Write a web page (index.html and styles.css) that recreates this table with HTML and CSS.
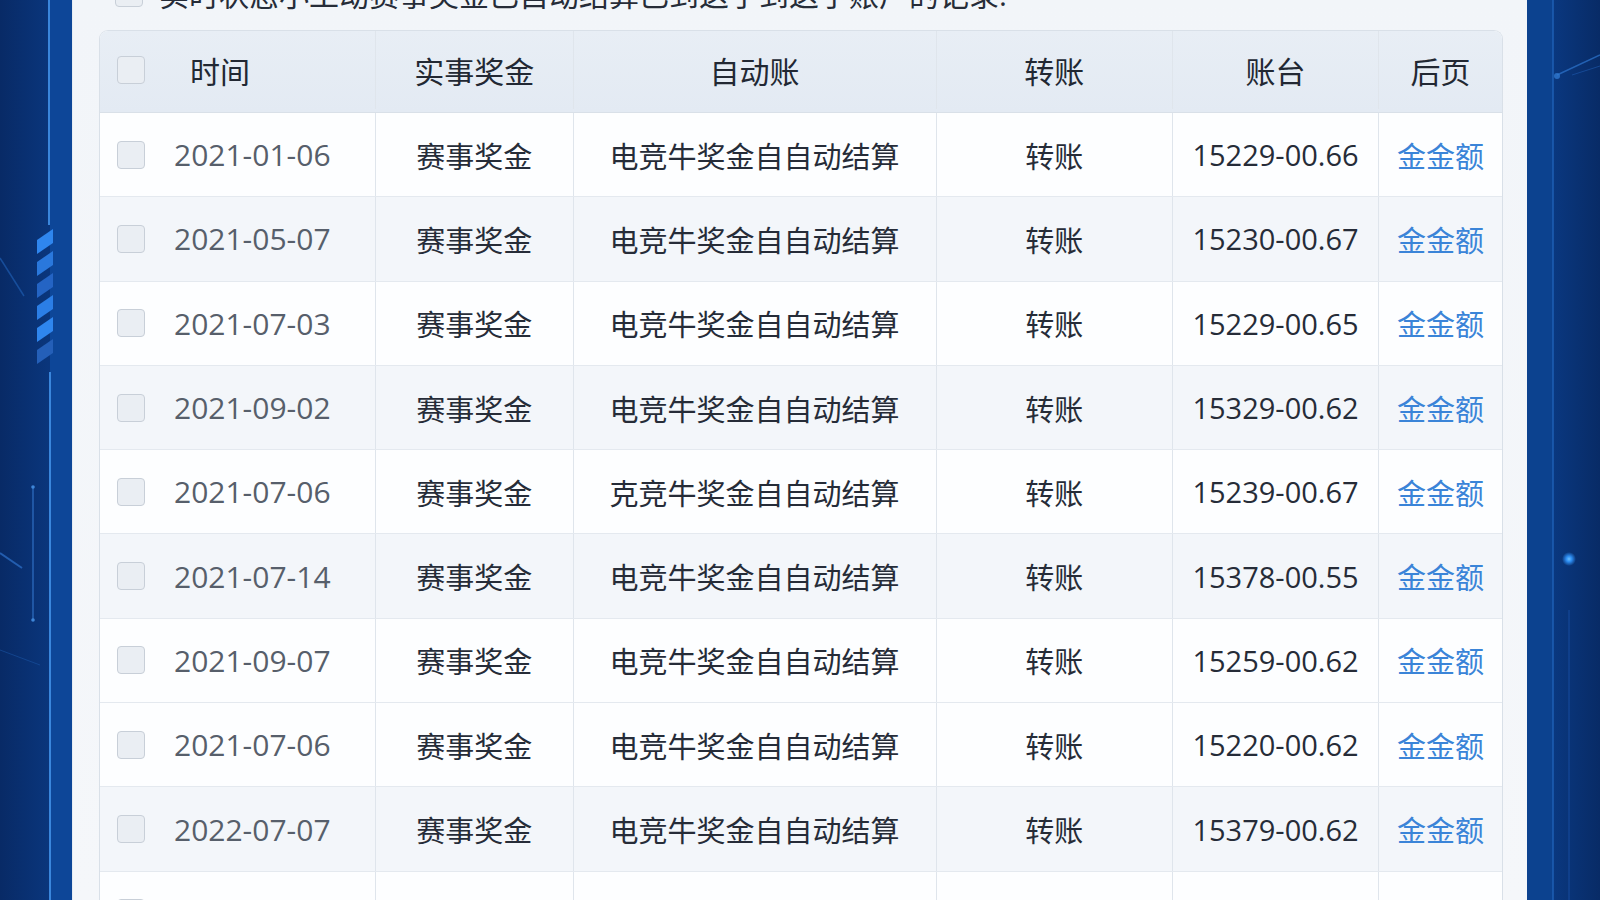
FILE: index.html
```html
<!DOCTYPE html>
<html lang="zh-CN">
<head>
<meta charset="utf-8">
<title>赛事奖金记录</title>
<link rel="stylesheet" href="styles.css">
</head>
<body>
<div class="page">
  <aside class="deco deco-left">
    <svg width="72" height="900" viewBox="0 0 72 900" xmlns="http://www.w3.org/2000/svg">
      <defs>
        <linearGradient id="lg" x1="0" y1="0" x2="1" y2="0">
          <stop offset="0" stop-color="#082a66"/>
          <stop offset="1" stop-color="#0b3b86"/>
        </linearGradient>
      </defs>
      <rect width="72" height="900" fill="url(#lg)"/>
      <rect x="50" y="0" width="22" height="900" fill="#0d4698"/>
      <line x1="49" y1="0" x2="49" y2="225" stroke="#3a86dc" stroke-width="2"/>
      <line x1="50" y1="372" x2="50" y2="900" stroke="#3a86dc" stroke-width="2"/>
      <polygon points="37,240 53,229 53,243 37,254" fill="#2f86ee"/>
      <polygon points="37,262 53,251 53,265 37,276" fill="#2a78dc"/>
      <polygon points="37,284 53,273 53,287 37,298" fill="#2464c4"/>
      <polygon points="37,306 53,295 53,309 37,320" fill="#2b7ee6"/>
      <polygon points="37,328 53,317 53,331 37,342" fill="#2f86ee"/>
      <polygon points="37,350 53,339 53,353 37,364" fill="#245fb8"/>
      <line x1="33" y1="487" x2="33" y2="620" stroke="#2f70c4" stroke-width="1.2"/>
      <circle cx="33" cy="487" r="1.8" fill="#3f86d8"/>
      <circle cx="33" cy="620" r="1.8" fill="#3f86d8"/>
      <line x1="0" y1="258" x2="24" y2="296" stroke="#1e5cb0" stroke-width="1.5" opacity="0.7"/>
      <line x1="0" y1="553" x2="22" y2="568" stroke="#2a6ac0" stroke-width="2" opacity="0.8"/>
      <line x1="0" y1="650" x2="40" y2="665" stroke="#1a54a4" stroke-width="1" opacity="0.6"/>
    </svg>
  </aside>

  <main class="panel">
    <div class="caption">
      <span class="cb"></span>
      <span class="caption-text">实时状态小工动赛事奖金已自动结算已到这于到这于账户的记录.</span>
    </div>

    <div class="table">
      <div class="row head">
        <div class="cell first"><span class="cb"></span><span class="hlabel">时间</span></div>
        <div class="cell">实事奖金</div>
        <div class="cell">自动账</div>
        <div class="cell">转账</div>
        <div class="cell">账台</div>
        <div class="cell">后页</div>
      </div>

      <div class="row">
        <div class="cell first"><span class="cb"></span><span class="date">2021-01-06</span></div>
        <div class="cell">赛事奖金</div>
        <div class="cell">电竞牛奖金自自动结算</div>
        <div class="cell">转账</div>
        <div class="cell">15229-00.66</div>
        <div class="cell link">金金额</div>
      </div>
      <div class="row alt">
        <div class="cell first"><span class="cb"></span><span class="date">2021-05-07</span></div>
        <div class="cell">赛事奖金</div>
        <div class="cell">电竞牛奖金自自动结算</div>
        <div class="cell">转账</div>
        <div class="cell">15230-00.67</div>
        <div class="cell link">金金额</div>
      </div>
      <div class="row">
        <div class="cell first"><span class="cb"></span><span class="date">2021-07-03</span></div>
        <div class="cell">赛事奖金</div>
        <div class="cell">电竞牛奖金自自动结算</div>
        <div class="cell">转账</div>
        <div class="cell">15229-00.65</div>
        <div class="cell link">金金额</div>
      </div>
      <div class="row alt">
        <div class="cell first"><span class="cb"></span><span class="date">2021-09-02</span></div>
        <div class="cell">赛事奖金</div>
        <div class="cell">电竞牛奖金自自动结算</div>
        <div class="cell">转账</div>
        <div class="cell">15329-00.62</div>
        <div class="cell link">金金额</div>
      </div>
      <div class="row">
        <div class="cell first"><span class="cb"></span><span class="date">2021-07-06</span></div>
        <div class="cell">赛事奖金</div>
        <div class="cell">克竞牛奖金自自动结算</div>
        <div class="cell">转账</div>
        <div class="cell">15239-00.67</div>
        <div class="cell link">金金额</div>
      </div>
      <div class="row alt">
        <div class="cell first"><span class="cb"></span><span class="date">2021-07-14</span></div>
        <div class="cell">赛事奖金</div>
        <div class="cell">电竞牛奖金自自动结算</div>
        <div class="cell">转账</div>
        <div class="cell">15378-00.55</div>
        <div class="cell link">金金额</div>
      </div>
      <div class="row">
        <div class="cell first"><span class="cb"></span><span class="date">2021-09-07</span></div>
        <div class="cell">赛事奖金</div>
        <div class="cell">电竞牛奖金自自动结算</div>
        <div class="cell">转账</div>
        <div class="cell">15259-00.62</div>
        <div class="cell link">金金额</div>
      </div>
      <div class="row">
        <div class="cell first"><span class="cb"></span><span class="date">2021-07-06</span></div>
        <div class="cell">赛事奖金</div>
        <div class="cell">电竞牛奖金自自动结算</div>
        <div class="cell">转账</div>
        <div class="cell">15220-00.62</div>
        <div class="cell link">金金额</div>
      </div>
      <div class="row alt">
        <div class="cell first"><span class="cb"></span><span class="date">2022-07-07</span></div>
        <div class="cell">赛事奖金</div>
        <div class="cell">电竞牛奖金自自动结算</div>
        <div class="cell">转账</div>
        <div class="cell">15379-00.62</div>
        <div class="cell link">金金额</div>
      </div>
      <div class="row">
        <div class="cell first"><span class="cb"></span><span class="date">2021-07-06</span></div>
        <div class="cell">赛事奖金</div>
        <div class="cell">电竞牛奖金自自动结算</div>
        <div class="cell">转账</div>
        <div class="cell">15229-00.62</div>
        <div class="cell link">金金额</div>
      </div>
    </div>
  </main>

  <aside class="deco deco-right">
    <svg width="73" height="900" viewBox="0 0 73 900" xmlns="http://www.w3.org/2000/svg">
      <defs>
        <linearGradient id="rg" x1="0" y1="0" x2="1" y2="0">
          <stop offset="0" stop-color="#0b3f8e"/>
          <stop offset="1" stop-color="#082b66"/>
        </linearGradient>
        <radialGradient id="dot">
          <stop offset="0" stop-color="#6cc0ff"/>
          <stop offset="0.4" stop-color="#2d8cf0"/>
          <stop offset="1" stop-color="#2d8cf0" stop-opacity="0"/>
        </radialGradient>
        <linearGradient id="glow" x1="0" y1="0" x2="0" y2="1">
          <stop offset="0" stop-color="#2f7fd8" stop-opacity="0.5"/>
          <stop offset="0.3" stop-color="#3aa6ff"/>
          <stop offset="0.95" stop-color="#3aa6ff"/>
          <stop offset="1" stop-color="#2f7fd8" stop-opacity="0.3"/>
        </linearGradient>
      </defs>
      <rect width="73" height="900" fill="url(#rg)"/>
      <rect x="0" y="0" width="26" height="900" fill="#0c428f"/>
      <line x1="26" y1="0" x2="26" y2="900" stroke="#1e5fb4" stroke-width="1.5"/>
      <line x1="26" y1="100" x2="26" y2="475" stroke="url(#glow)" stroke-width="2.5"/>
      <line x1="30" y1="75" x2="73" y2="55" stroke="#2a6ec4" stroke-width="1.5" opacity="0.8"/>
      <circle cx="30" cy="76" r="3" fill="#2f78d0" opacity="0.8"/>
      <line x1="45" y1="75" x2="73" y2="66" stroke="#1f5bb0" stroke-width="1" opacity="0.6"/>
      <line x1="42" y1="610" x2="42" y2="900" stroke="#15489a" stroke-width="1.2"/>
      <circle cx="42" cy="559" r="7" fill="url(#dot)"/>
    </svg>
  </aside>
</div>
</body>
</html>
```

FILE: styles.css
```css
* {
  box-sizing: border-box;
}

html, body {
  margin: 0;
  padding: 0;
  width: 1600px;
  height: 900px;
  overflow: hidden;
  background: #0a3478;
}

body {
  font-family: "Open Sans", "Noto Sans CJK SC", sans-serif;
  color: #262c38;
}

.page {
  display: flex;
  width: 1600px;
  height: 900px;
}

.deco {
  flex: none;
  height: 900px;
}

.deco svg {
  display: block;
}

.deco-left {
  width: 72px;
}

.deco-right {
  width: 73px;
}

.panel {
  flex: none;
  width: 1455px;
  height: 900px;
  overflow: hidden;
  background: linear-gradient(180deg, #f2f5f9 0%, #f5f7fa 100%);
  padding: 0 25px 0 26px;
  border-left: 1px solid #e6ecf2;
}

.caption {
  display: flex;
  align-items: center;
  height: 30px;
  margin-top: -22px;
  margin-bottom: 22px;
  padding-left: 16px;
  gap: 16px;
  font-size: 30px;
  color: #262c38;
  white-space: nowrap;
}

.cb {
  flex: none;
  display: inline-block;
  width: 28px;
  height: 28px;
  border: 1.5px solid #c8cfd8;
  border-radius: 4px;
  background: #eaeef3;
}

.table {
  width: 1404px;
  border: 1px solid #d9e0e8;
  border-bottom: none;
  border-radius: 9px 9px 0 0;
  overflow: hidden;
  background: #ffffff;
}

.row {
  display: grid;
  grid-template-columns: 276px 197.5px 363px 236.5px 206px 123px;
  height: 84.3px;
  border-bottom: 1px solid #e4e9ef;
  background: #fdfeff;
  font-size: 29px;
}

.row.alt {
  background: #f3f6fa;
}

.row.head {
  height: 82px;
  padding-bottom: 3px;
  background: linear-gradient(180deg, #e8eef5 0%, #e3eaf3 100%);
  border-bottom: 1px solid #d9e0e8;
  font-size: 30px;
  color: #222833;
}

.cell {
  display: flex;
  align-items: center;
  justify-content: center;
  border-right: 1px solid #dfe5ec;
  white-space: nowrap;
}

.cell:last-child {
  border-right: none;
}

.cell.first {
  justify-content: flex-start;
  padding-left: 17px;
}

.hlabel {
  margin-left: 45px;
}

.date {
  margin-left: 29px;
  color: #575f6b;
  font-size: 30px;
}

.link {
  color: #3a84d8;
}
```
